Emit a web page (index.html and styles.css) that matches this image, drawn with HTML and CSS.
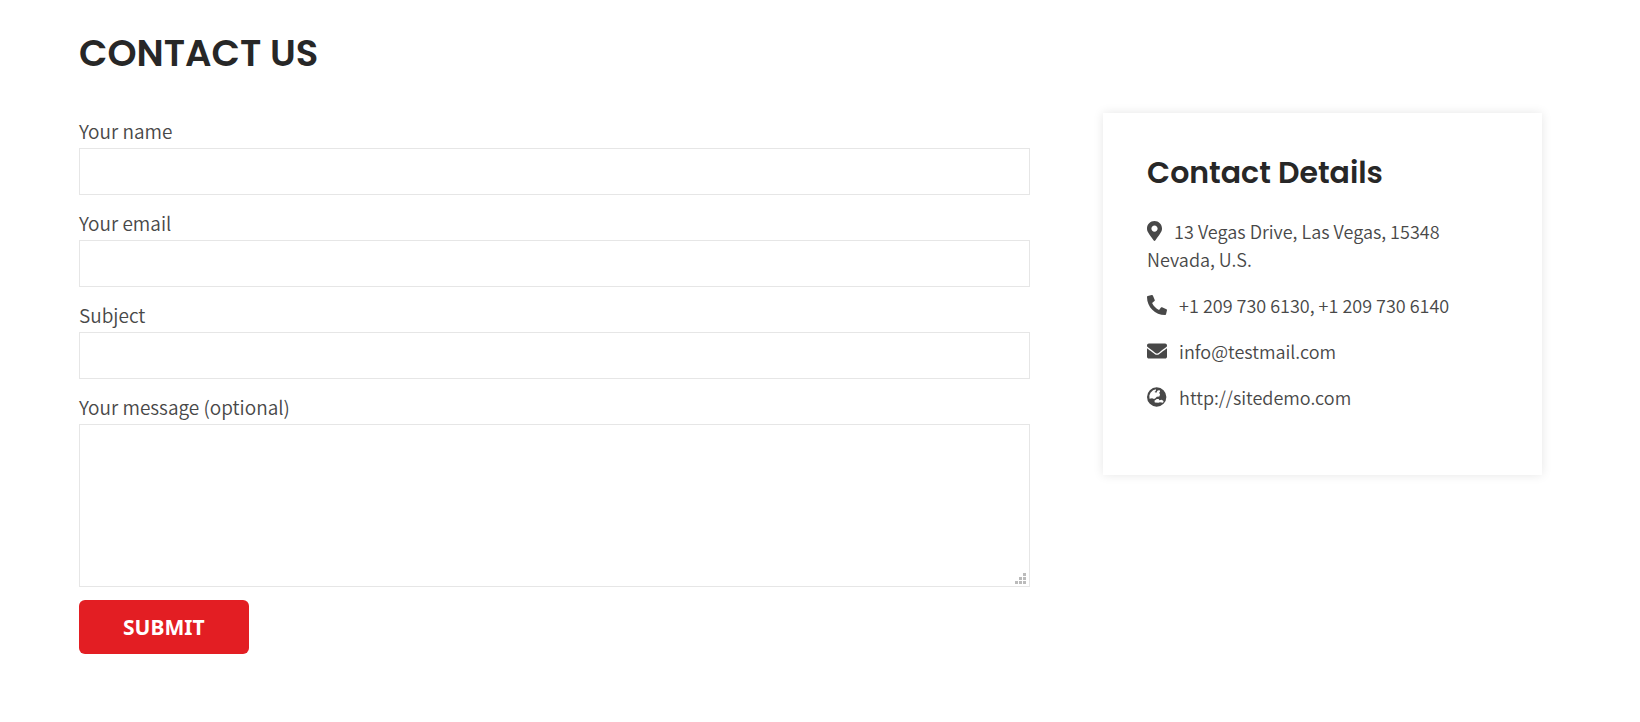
FILE: index.html
```
<!DOCTYPE html>
<html lang="en">
<head>
    <meta charset="UTF-8">
    <meta name="viewport" content="width=device-width, initial-scale=1.0">
    <title>Contact Us</title>
    <link rel="stylesheet" href="styles.css">
</head>
<body>
    <main class="container">
        <h1>CONTACT US</h1>

        <div class="columns">
            <form class="contact-form">
                <div class="form-group">
                    <label for="name">Your name</label>
                    <input type="text" id="name" name="name">
                </div>
                <div class="form-group">
                    <label for="email">Your email</label>
                    <input type="email" id="email" name="email">
                </div>
                <div class="form-group">
                    <label for="subject">Subject</label>
                    <input type="text" id="subject" name="subject">
                </div>
                <div class="form-group">
                    <label for="message">Your message (optional)</label>
                    <textarea id="message" name="message"></textarea>
                </div>
                <button type="submit">SUBMIT</button>
            </form>

            <aside class="details">
                <h2>Contact Details</h2>
                <ul>
                    <li>
                        <svg class="icon icon-pin" viewBox="0 0 384 512"><path d="M172.268 501.67C26.97 291.031 0 269.413 0 192 0 85.961 85.961 0 192 0s192 85.961 192 192c0 77.413-26.97 99.031-172.268 309.67-9.535 13.774-29.93 13.773-39.464 0zM192 272c44.183 0 80-35.817 80-80s-35.817-80-80-80-80 35.817-80 80 35.817 80 80 80z"/></svg>
                        13 Vegas Drive, Las Vegas, 15348 Nevada, U.S.
                    </li>
                    <li>
                        <svg class="icon" viewBox="0 0 512 512"><path transform="matrix(-1 0 0 1 512 0)" d="M493.4 24.6l-104-24c-11.3-2.6-22.9 3.3-27.5 13.9l-48 112c-4.2 9.8-1.4 21.3 6.9 28l60.6 49.6c-36 76.700-98.900 140.500-177.200 177.200l-49.600-60.600c-6.800-8.300-18.200-11.100-28-6.900l-112 48C3.900 366.500-2 378.100.6 389.400l24 104C27.100 504.200 36.700 512 48 512c256.100 0 464-207.500 464-464 0-11.200-7.700-20.900-18.600-23.400z"/></svg>
                        +1 209 730 6130, +1 209 730 6140
                    </li>
                    <li>
                        <svg class="icon" viewBox="0 0 512 512"><path d="M502.3 190.8c3.9-3.1 9.7-.2 9.7 4.700V400c0 26.500-21.500 48-48 48H48c-26.500 0-48-21.500-48-48V195.600c0-5 5.700-7.800 9.700-4.700 22.400 17.400 52.100 39.500 154.100 113.600 21.100 15.400 56.700 47.800 92.200 47.600 35.700.3 72-32.800 92.300-47.600 102-74.100 131.600-96.300 154-113.700zM256 320c23.200.4 56.600-29.200 73.400-41.400 132.700-96.300 142.800-104.700 173.400-128.700 5.800-4.500 9.200-11.500 9.200-18.900v-19c0-26.500-21.500-48-48-48H48c-26.500 0-48 21.500-48 48v19c0 7.400 3.400 14.300 9.200 18.900 30.600 23.900 40.700 32.400 173.400 128.700 16.800 12.200 50.200 41.800 73.400 41.400z"/></svg>
                        info@testmail.com
                    </li>
                    <li>
                        <svg class="icon" viewBox="0 0 512 512"><path fill-rule="evenodd" d="M248 8a248 248 0 1 0 0 496a248 248 0 1 0 0-496zM60 220L90 145 155 80 230 55 225 100 190 125 240 150 265 95 320 75 335 120 310 150 335 190 315 245 250 250 215 285 180 310 130 285 65 300zM190 350L250 305 300 310 315 340 375 325 425 360 410 400 330 390 290 400 200 395z"/></svg>
                        http://sitedemo.com
                    </li>
                </ul>
            </aside>
        </div>
    </main>
</body>
</html>
```
FILE: styles.css
```
* {
    box-sizing: border-box;
    margin: 0;
    padding: 0;
}
body {
    background: #fff;
    color: #484848;
    font-family: "Source Sans Pro", "Noto Sans CJK JP", sans-serif;
    font-size: 19px;
    font-weight: 350;
}
.container {
    padding: 30px 98px 60px 79px;
}
h1,
h2 {
    color: #272727;
    font-family: Poppins, Inter, sans-serif;
    font-weight: 600;
}
h1 {
    font-size: 37px;
    line-height: 46px;
    margin-bottom: 37px;
}
.columns {
    display: flex;
    justify-content: space-between;
    align-items: flex-start;
}
.contact-form {
    width: 65%;
}
.form-group {
    margin-bottom: 10px;
}
label {
    display: block;
    line-height: 35px;
}
input,
textarea {
    display: block;
    width: 100%;
    height: 47px;
    padding: 8px 12px;
    border: 1px solid #e6e6e6;
    background: #fff;
    color: inherit;
    font: inherit;
}
textarea {
    height: 163px;
    margin-bottom: 13px;
    resize: vertical;
}
input:focus,
textarea:focus {
    outline: none;
    border-color: #e31e23;
}
textarea::-webkit-resizer {
    background:
        linear-gradient(#bbb, #bbb) 9px 2px / 3px 3px no-repeat,
        linear-gradient(#bbb, #bbb) 5px 6px / 3px 3px no-repeat,
        linear-gradient(#bbb, #bbb) 9px 6px / 3px 3px no-repeat,
        linear-gradient(#bbb, #bbb) 1px 10px / 3px 3px no-repeat,
        linear-gradient(#bbb, #bbb) 5px 10px / 3px 3px no-repeat,
        linear-gradient(#bbb, #bbb) 9px 10px / 3px 3px no-repeat;
}
button {
    height: 54px;
    padding: 0 44px;
    border: none;
    border-radius: 6px;
    background: #e31e23;
    color: #fff;
    font-family: "Noto Sans", sans-serif;
    font-size: 21px;
    font-weight: 700;
    cursor: pointer;
}
button:hover {
    background: #c8171c;
}
.details {
    width: 30%;
    padding: 45px 44px 46px;
    background: #fff;
    box-shadow: 0 0 10px rgba(0, 0, 0, 0.1);
    font-size: 18px;
}
h2 {
    font-size: 30px;
    line-height: 30px;
    margin-bottom: 29px;
}
ul {
    list-style: none;
}
li {
    margin-bottom: 18px;
    line-height: 28px;
}
.icon {
    width: 20px;
    height: 20px;
    margin-right: 8px;
    vertical-align: -2px;
    fill: #484848;
}
.icon-pin {
    width: 15px;
}
@media (max-width: 900px) {
    .container {
        padding: 30px 20px;
    }
    .columns {
        flex-direction: column;
        gap: 40px;
    }
    .contact-form,
    .details {
        width: 100%;
    }
}
```
